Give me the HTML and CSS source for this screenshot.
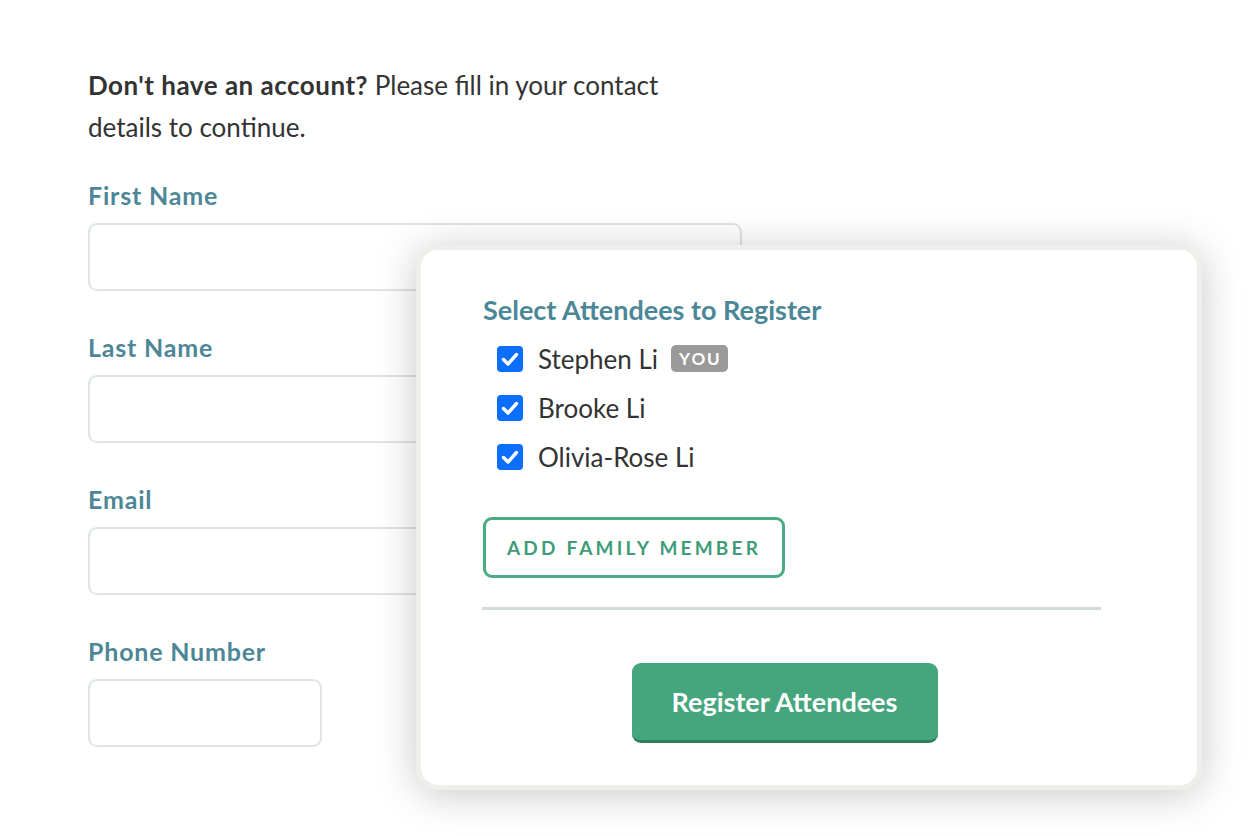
FILE: index.html
```html
<!DOCTYPE html>
<html>
<head>
<meta charset="utf-8">
<link rel="stylesheet" href="styles.css">
</head>
<body>
<div class="page">
  <form class="form">
    <p class="intro"><strong>Don't have an account?</strong> Please fill in your contact details to continue.</p>
    <label class="field">
      <span class="label">First Name</span>
      <span class="input wide"></span>
    </label>
    <label class="field">
      <span class="label">Last Name</span>
      <span class="input wide"></span>
    </label>
    <label class="field">
      <span class="label">Email</span>
      <span class="input wide"></span>
    </label>
    <label class="field">
      <span class="label">Phone Number</span>
      <span class="input narrow"></span>
    </label>
  </form>

  <div class="modal">
    <h2 class="modal-title">Select Attendees to Register</h2>
    <ul class="attendees">
      <li class="attendee">
        <span class="check"><svg viewBox="0 0 26 26" width="26" height="26"><path d="M6.5 13.5l4.5 4.5 8.5-9.5" fill="none" stroke="#fff" stroke-width="3.4" stroke-linecap="round" stroke-linejoin="round"/></svg></span>
        <span class="name">Stephen Li</span>
        <span class="badge">YOU</span>
      </li>
      <li class="attendee">
        <span class="check"><svg viewBox="0 0 26 26" width="26" height="26"><path d="M6.5 13.5l4.5 4.5 8.5-9.5" fill="none" stroke="#fff" stroke-width="3.4" stroke-linecap="round" stroke-linejoin="round"/></svg></span>
        <span class="name">Brooke Li</span>
      </li>
      <li class="attendee">
        <span class="check"><svg viewBox="0 0 26 26" width="26" height="26"><path d="M6.5 13.5l4.5 4.5 8.5-9.5" fill="none" stroke="#fff" stroke-width="3.4" stroke-linecap="round" stroke-linejoin="round"/></svg></span>
        <span class="name">Olivia-Rose Li</span>
      </li>
    </ul>
    <button type="button" class="btn-outline">ADD FAMILY MEMBER</button>
    <hr class="divider">
    <div class="actions">
      <button type="button" class="btn-primary">Register Attendees</button>
    </div>
  </div>
</div>
</body>
</html>
```

FILE: styles.css
```css
* { box-sizing: border-box; }
html, body { margin: 0; padding: 0; background: #fff; }
body {
  font-family: "Lato", "Liberation Sans", sans-serif;
  color: #333;
  width: 1255px;
  height: 836px;
  overflow: hidden;
}
.page {
  position: relative;
  width: 1255px;
  height: 836px;
}
.form {
  display: flex;
  flex-direction: column;
  padding: 64px 0 0 88px;
  width: 742px;
}
.intro {
  margin: 0 0 31px;
  font-size: 26px;
  line-height: 42px;
  width: 610px;
  color: #333;
}
.intro strong { font-weight: 700; letter-spacing: 0.5px; }
.field {
  display: flex;
  flex-direction: column;
  margin-bottom: 40px;
}
.label {
  font-size: 25px;
  font-weight: 700;
  letter-spacing: 0.8px;
  line-height: 32px;
  color: #4d8797;
  margin-bottom: 12px;
}
.input {
  display: block;
  height: 68px;
  border: 2px solid #dfe4e4;
  border-radius: 9px;
  background: #fff;
}
.input.wide { width: 654px; }
.input.narrow { width: 234px; }

.modal {
  position: absolute;
  left: 416px;
  top: 245px;
  width: 786px;
  height: 545px;
  background: #fff;
  border: 5px solid #efeeea;
  border-radius: 22px;
  box-shadow: 0 4px 40px rgba(0,0,0,0.22);
  padding: 42px 100px 0 62px;
  display: flex;
  flex-direction: column;
}
.modal-title {
  margin: 0;
  font-size: 27px;
  line-height: 36px;
  font-weight: 700;
  color: #4b8797;
}
.attendees {
  list-style: none;
  margin: 6px 0 0;
  padding: 0 0 0 14px;
  display: flex;
  flex-direction: column;
}
.attendee {
  display: flex;
  align-items: center;
  height: 49px;
}
.check {
  width: 26px;
  height: 26px;
  border-radius: 4px;
  background: #0b6efd;
  display: flex;
  margin-right: 15px;
}
.check svg { display: block; }
.name {
  font-size: 26px;
  color: #333;
}
.badge {
  margin-left: 13px;
  background: #9a9a9a;
  color: #fff;
  font-weight: 700;
  font-size: 17px;
  letter-spacing: 2px;
  padding: 3px 6px 3px 8px;
  border-radius: 5px;
  line-height: 21px;
  margin-top: -1px;
}
.btn-outline {
  align-self: flex-start;
  margin-top: 36px;
  width: 302px;
  height: 61px;
  background: #fff;
  border: 3px solid #4aab84;
  border-radius: 9px;
  font-family: inherit;
  font-size: 19px;
  font-weight: 700;
  letter-spacing: 3.2px;
  color: #3f9c78;
  padding: 0;
}
.divider {
  margin: 29px 0 0 -1px;
  border: 0;
  height: 3px;
  width: 619px;
  background: #d4dcd9;
}
.actions {
  display: flex;
  justify-content: center;
  width: 619px;
  padding-right: 16px;
  margin-top: 53px;
}
.btn-primary {
  width: 306px;
  height: 80px;
  background: #45a57d;
  border: 0;
  border-bottom: 3px solid #2e7f5d;
  border-radius: 9px;
  color: #fff;
  font-family: inherit;
  font-size: 27px;
  font-weight: 700;
  padding: 0;
}
```
